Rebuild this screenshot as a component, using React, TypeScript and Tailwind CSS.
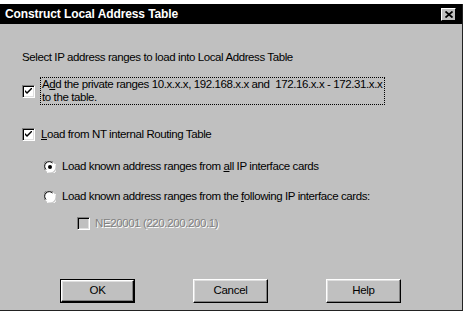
import React from "react";

const font = "font-['Liberation_Sans',Arial,sans-serif]";

function CheckBox({ checked, disabled }: { checked?: boolean; disabled?: boolean }) {
    return (
        <div
            className={
                "w-[13px] h-[13px] shrink-0 border border-t-[#808080] border-l-[#808080] border-b-white border-r-white shadow-[inset_1px_1px_0_#000,inset_-1px_-1px_0_#dfdfdf] flex items-center justify-center " +
                (disabled ? "bg-[#c0c0c0]" : "bg-white")
            }
        >
            {checked && (
                <svg width="7" height="7" viewBox="0 0 7 7">
                    <path d="M0 2 L0 4 L2 6 L7 1 L7 -1 L2 4 Z" fill="#000" />
                </svg>
            )}
        </div>
    );
}

function Radio({ checked }: { checked?: boolean }) {
    return (
        <svg width="12" height="12" viewBox="0 0 12 12" className="shrink-0">
            <circle cx="6" cy="6" r="5.5" fill="#fff" />
            <path d="M1 9 A5.5 5.5 0 0 1 9 1" stroke="#808080" strokeWidth="1" fill="none" />
            <path d="M2 8.5 A4.5 4.5 0 0 1 8.5 2" stroke="#000" strokeWidth="1" fill="none" />
            <path d="M3 11 A5.5 5.5 0 0 0 11 3" stroke="#fff" strokeWidth="1" fill="none" />
            {checked && <circle cx="6" cy="6" r="2" fill="#000" />}
        </svg>
    );
}

function Button({ label, isDefault }: { label: string; isDefault?: boolean }) {
    return (
        <div className={"w-[75px] h-[24px] " + (isDefault ? "border border-black" : "")}>
            <div
                className={
                    "w-full h-full bg-[#c0c0c0] border border-t-white border-l-white border-b-black border-r-black shadow-[inset_-1px_-1px_0_#808080,inset_1px_1px_0_#dfdfdf] flex items-center justify-center text-[11.5px] tracking-[-0.3px] text-black"
                }
            >
                {label}
            </div>
        </div>
    );
}

export default function App() {
    return (
        <div className={"w-[467px] h-[315px] bg-white overflow-hidden " + font}>
            <div className="mt-[4px] w-[463px] h-[307px] bg-[#c0c0c0] border-r border-b border-[#222] flex flex-col">
                <div className="h-[20px] shrink-0 bg-black flex items-center justify-between pl-[5px] pr-[6px]">
                    <span className="text-white font-bold text-[12px] tracking-[-0.1px]">Construct Local Address Table</span>
                    <div className="w-[15px] h-[13px] bg-[#c0c0c0] border border-t-white border-l-white border-b-black border-r-black flex items-center justify-center">
                        <svg width="8" height="7" viewBox="0 0 8 7">
                            <path d="M0.5 0.5 L7.5 6.5 M7.5 0.5 L0.5 6.5" stroke="#000" strokeWidth="1.8" />
                        </svg>
                    </div>
                </div>

                <div className="flex flex-col pl-[22px] text-[11.5px] tracking-[-0.4px] text-black whitespace-nowrap">
                    <div className="mt-[27px] h-[13px] leading-[13px]">
                        Select IP address ranges to load into Local Address Table
                    </div>

                    <div className="mt-[13px] flex items-start">
                        <div className="mt-[8px]">
                            <CheckBox checked />
                        </div>
                        <div className="ml-[5px] w-[345px] h-[28px] border border-dotted border-black px-[1px] leading-[13px]">
                            A<span className="underline">d</span>d the private ranges 10.x.x.x, 192.168.x.x and&nbsp; 172.16.x.x - 172.31.x.x
                            <br />
                            to the table.
                        </div>
                    </div>

                    <div className="mt-[22px] flex items-center h-[14px]">
                        <CheckBox checked />
                        <span className="ml-[6px] leading-[14px]">
                            <span className="underline">L</span>oad from NT internal Routing Table
                        </span>
                    </div>

                    <div className="mt-[19px] ml-[22px] flex items-center h-[13px]">
                        <Radio checked />
                        <span className="ml-[6px] leading-[13px]">
                            Load known address ranges from <span className="underline">a</span>ll IP interface cards
                        </span>
                    </div>

                    <div className="mt-[17px] ml-[22px] flex items-center h-[13px]">
                        <Radio />
                        <span className="ml-[6px] leading-[13px]">
                            Load known address ranges from the <span className="underline">f</span>ollowing IP interface cards:
                        </span>
                    </div>

                    <div className="mt-[14px] ml-[55px] flex items-center h-[13px]">
                        <CheckBox disabled />
                        <span className="ml-[5px] leading-[13px] text-[#808080] [text-shadow:1px_1px_0_#fff]">
                            NE20001 (220.200.200.1)
                        </span>
                    </div>
                </div>

                <div className="mt-[49px] pl-[60px] flex gap-[58px]">
                    <Button label="OK" isDefault />
                    <Button label="Cancel" />
                    <Button label="Help" />
                </div>
            </div>
        </div>
    );
}
